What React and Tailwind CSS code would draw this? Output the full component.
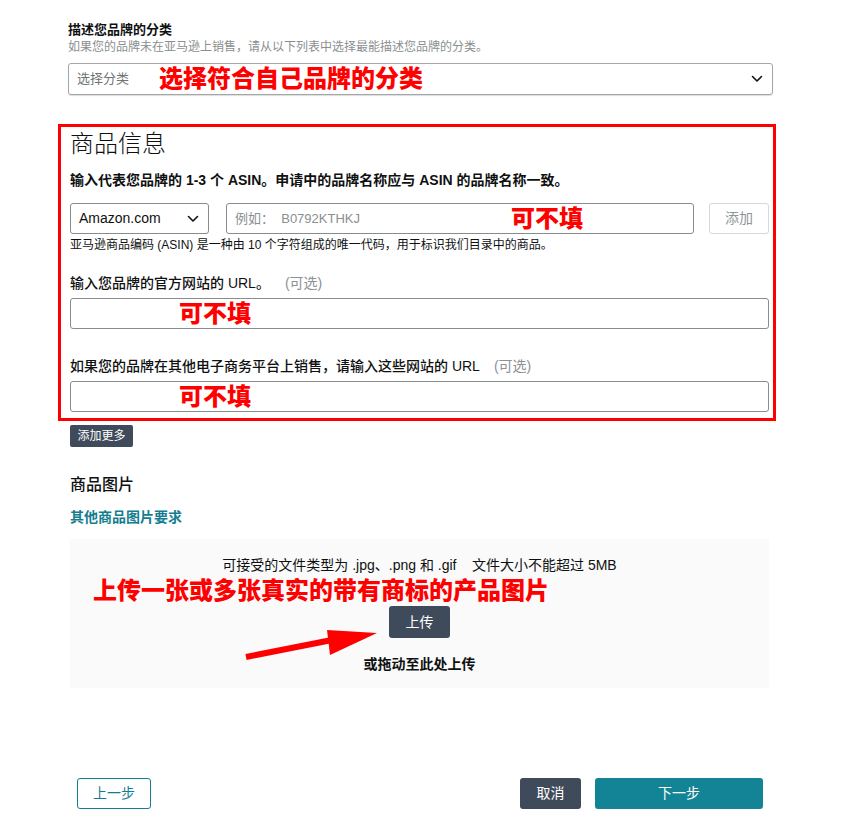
import React from "react";

const FONT = { fontFamily: '"Liberation Sans", "Noto Sans CJK SC", sans-serif' };

function Chevron({ className }) {
  return (
    <svg className={className} width="12" height="8" viewBox="0 0 12 8" fill="none">
      <path d="M1.5 1.5L6 6L10.5 1.5" stroke="#0f1111" strokeWidth="1.6" strokeLinecap="round" strokeLinejoin="round" />
    </svg>
  );
}

export default function App() {
  return (
    <div className="min-h-[835px] w-[847px] bg-white text-[#0f1111]" style={FONT}>
      <div className="ml-[68px] w-[705px] pt-[21px]">
        <div className="text-[13px] leading-[18px] font-bold">描述您品牌的分类</div>
        <div className="text-[12px] leading-[16px] text-[#8a8f8f]">如果您的品牌未在亚马逊上销售，请从以下列表中选择最能描述您品牌的分类。</div>
        <div className="mt-[8px] flex h-[32px] items-center rounded-[3px] border border-[#a6a6a6] pl-[8px] pr-[9px] shadow-[0_1px_1px_rgba(15,17,17,0.15)]">
          <span className="text-[13px] text-[#6f7373]">选择分类</span>
          <span className="ml-[30px] text-[24px] font-black leading-none text-[#ff0000]">选择符合自己品牌的分类</span>
          <Chevron className="ml-auto" />
        </div>

        <div className="mt-[29px] ml-[-10px] mr-[-3px] border-[3px] border-[#ff0000] pl-[9px] pr-[4px] pt-[2px] pb-[6px]">
          <div className="text-[24px] leading-[30px] font-light text-[#0f1111]">商品信息</div>
          <div className="mt-[11px] text-[14px] leading-[20px] font-bold">输入代表您品牌的 1-3 个 ASIN。申请中的品牌名称应与 ASIN 的品牌名称一致。</div>
          <div className="mt-[13px] flex h-[31px] items-stretch">
            <div className="flex w-[139px] items-center rounded-[3px] border border-[#888c8c] pl-[8px] pr-[9px]">
              <span className="text-[14px]">Amazon.com</span>
              <Chevron className="ml-auto" />
            </div>
            <div className="ml-[17px] flex w-[468px] items-center rounded-[3px] border border-[#888c8c] pl-[8px]">
              <span className="text-[13px] text-[#8a8f8f]">例如：&nbsp;&nbsp;B0792KTHKJ</span>
              <span className="ml-[151px] text-[24px] font-black leading-none text-[#ff0000]">可不填</span>
            </div>
            <div className="ml-[15px] flex w-[60px] items-center justify-center rounded-[3px] border border-[#d5d9d9] text-[14px] text-[#8d9696]">添加</div>
          </div>
          <div className="mt-[3px] text-[12px] leading-[16px]">亚马逊商品编码 (ASIN) 是一种由 10 个字符组成的唯一代码，用于标识我们目录中的商品。</div>

          <div className="mt-[20px] text-[14px] leading-[20px] font-medium">
            输入您品牌的官方网站的 URL。<span className="ml-[15px] font-normal text-[#8d9096]">(可选)</span>
          </div>
          <div className="mt-[5px] flex h-[31px] items-center rounded-[3px] border border-[#888c8c] pl-[108px]">
            <span className="text-[24px] font-black leading-none text-[#ff0000]">可不填</span>
          </div>

          <div className="mt-[27px] text-[14px] leading-[20px] font-medium">
            如果您的品牌在其他电子商务平台上销售，请输入这些网站的 URL<span className="ml-[14px] font-normal text-[#8d9096]">(可选)</span>
          </div>
          <div className="mt-[5px] flex h-[31px] items-center rounded-[3px] border border-[#888c8c] pl-[108px]">
            <span className="text-[24px] font-black leading-none text-[#ff0000]">可不填</span>
          </div>
        </div>

        <div className="ml-[2px] mr-[4px]">
          <button className="mt-[4px] flex h-[22px] w-[63px] items-center justify-center rounded-[2px] bg-[#3f4b5a] text-[12px] text-white">添加更多</button>

          <div className="mt-[27px] text-[16px] leading-[22px] font-medium">商品图片</div>
          <div className="mt-[12px] text-[14px] leading-[18px] font-bold text-[#137e90]">其他商品图片要求</div>

          <div className="relative mt-[13px] flex h-[149px] flex-col bg-[#fafafa] pt-[17px]">
            <div className="text-center text-[14px] leading-[18px]">可接受的文件类型为 .jpg、.png 和 .gif&nbsp;&nbsp;&nbsp;&nbsp;文件大小不能超过 5MB</div>
            <div className="mt-[3px] pl-[23px] text-[24px] leading-[28px] font-black text-[#ff0000]">上传一张或多张真实的带有商标的产品图片</div>
            <div className="mt-[1px] flex justify-center">
              <button className="flex h-[32px] w-[61px] items-center justify-center rounded-[3px] bg-[#3f4b5a] text-[14px] text-white">上传</button>
            </div>
            <div className="mt-[17px] text-center text-[14px] leading-[18px] font-bold">或拖动至此处上传</div>
            <svg className="pointer-events-none absolute left-0 top-0" width="699" height="149" viewBox="0 0 699 149">
              <line x1="176" y1="118" x2="262" y2="101" stroke="#ff0000" strokeWidth="6" />
              <polygon points="307,94 257,91 260,116" fill="#ff0000" />
            </svg>
          </div>
        </div>

        <div className="mt-[90px] flex items-center">
          <button className="ml-[9px] flex h-[31px] w-[74px] items-center justify-center rounded-[3px] border border-[#137e90] text-[14px] text-[#137e90]">上一步</button>
          <button className="ml-auto flex h-[31px] w-[61px] items-center justify-center rounded-[3px] bg-[#3f4b5a] text-[14px] text-white">取消</button>
          <button className="ml-[14px] mr-[10px] flex h-[31px] w-[168px] items-center justify-center rounded-[3px] bg-[#138496] text-[14px] text-white">下一步</button>
        </div>
      </div>
    </div>
  );
}
